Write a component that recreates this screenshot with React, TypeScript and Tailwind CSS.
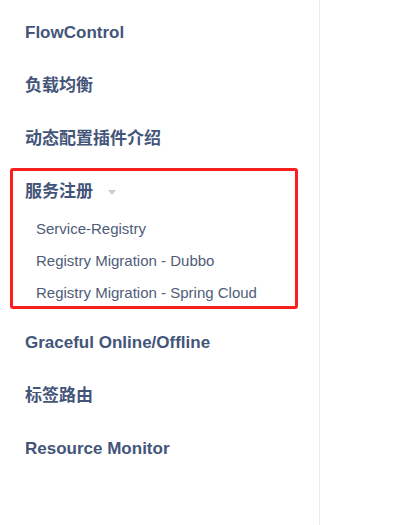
import React from 'react'

const headingCls = 'block text-[17px] leading-[24px] font-bold text-[#44557a]'
const linkCls = 'block text-[15px] leading-[24px] text-[#4f5d78]'

export default function App() {
  return (
    <div
      className="h-[525px] w-[407px] bg-white flex"
      style={{ fontFamily: '"Liberation Sans", "Noto Sans CJK SC", sans-serif' }}
    >
      <aside className="w-[320px] h-full border-r border-[#eaecef] pt-[21px]">
        <div className="pl-[25px]">
          <a className={headingCls}>FlowControl</a>
          <a className={`${headingCls} mt-[29px]`}>负载均衡</a>
          <a className={`${headingCls} mt-[29px]`}>动态配置插件介绍</a>
        </div>

        {/* highlighted group */}
        <div className="mt-[17px] ml-[10px] w-[288px] border-[3px] border-[#fb1f1f] rounded-[3px] pt-[9px] pb-px">
          <div className="pl-[12px] flex items-center">
            <span className={headingCls}>服务注册</span>
            <span className="ml-[15px] mt-px w-0 h-0 border-l-[4px] border-r-[4px] border-t-[5px] border-l-transparent border-r-transparent border-t-[#cccccc]" />
          </div>
          <ul className="mt-[13px] pl-[23px] flex flex-col gap-2">
            <li><a className={linkCls}>Service-Registry</a></li>
            <li><a className={linkCls}>Registry Migration - Dubbo</a></li>
            <li><a className={linkCls}>Registry Migration - Spring Cloud</a></li>
          </ul>
        </div>

        <div className="pl-[25px] mt-[22px]">
          <a className={headingCls}>Graceful Online/Offline</a>
          <a className={`${headingCls} mt-[29px]`}>标签路由</a>
          <a className={`${headingCls} mt-[29px]`}>Resource Monitor</a>
        </div>
      </aside>
    </div>
  )
}
